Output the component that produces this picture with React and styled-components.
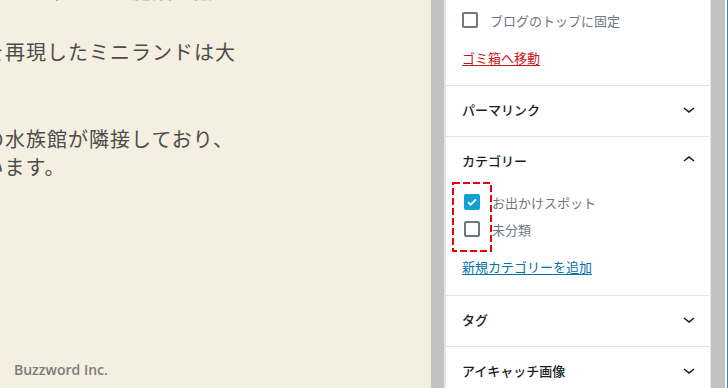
// Import React Libraries
import React from 'react';

// Import Style
import styled, { createGlobalStyle } from 'styled-components';

const jpFont = `"Noto Sans CJK JP", "Noto Sans", sans-serif`;

const GlobalStyle = createGlobalStyle`
  html, body {
    margin: 0;
    padding: 0;
    height: 100%;
    overflow: hidden;
  }
  #root {
    height: 100%;
  }
`;

const Page = styled.div`
  display: flex;
  height: 388px;
  width: 728px;
  overflow: hidden;
`;

// Left side : article preview
const Main = styled.div`
  width: 431px;
  flex: none;
  background: #f4efe0;
  display: flex;
  flex-direction: column;
  overflow: hidden;
`;

const Article = styled.div`
  margin-top: -23px;
  margin-left: -121px;
  font-family: ${jpFont};
  font-size: 20px;
  letter-spacing: 1px;
  line-height: 28px;
  color: #4c4c4c;
`;

const Paragraph = styled.div`
  margin-bottom: ${props => props.gap || 31}px;
`;

const Line = styled.div`
  white-space: nowrap;
`;

const Footer = styled.div`
  margin-top: auto;
  padding: 0 0 9px 14px;
  font-family: "Open Sans", "Noto Sans", sans-serif;
  font-size: 14px;
  font-weight: 600;
  color: #7c7c7c;
`;

// Gutters and scroll track
const Gutter = styled.div`
  flex: none;
  width: ${props => props.width}px;
  background: ${props => props.color};
`;

// Right side : document settings sidebar
const Sidebar = styled.div`
  flex: none;
  width: 264px;
  background: #fff;
  border-left: 2px solid #e4e4e4;
  border-right: 1px solid #e2e4e7;
  font-family: ${jpFont};
  font-size: 13px;
`;

const Section = styled.div`
  border-bottom: 1px solid #e2e4e7;
`;

const TopBody = styled.div`
  padding: 12px 16px 17px 16px;
`;

const CheckRow = styled.label`
  display: flex;
  align-items: center;
  gap: 12px;
  height: ${props => props.height || 16}px;
  margin-bottom: ${props => props.gap || 0}px;
  color: #6c7781;
  line-height: 1;
`;

const Box = styled.span`
  flex: none;
  box-sizing: border-box;
  width: 16px;
  height: 16px;
  border-radius: 2px;
  border: 2px solid ${props => (props.checked ? '#11a0d2' : '#6c7781')};
  background: ${props => (props.checked ? '#11a0d2' : '#fff')};
  display: flex;
  align-items: center;
  justify-content: center;
`;

const TextLink = styled.a`
  display: block;
  line-height: 20px;
  margin-top: ${props => props.top}px;
  margin-left: ${props => props.indent || 0}px;
  color: ${props => props.color};
  text-decoration: underline;
  text-underline-offset: 2px;
  width: max-content;
`;

const Header = styled.div`
  display: flex;
  align-items: center;
  justify-content: space-between;
  box-sizing: border-box;
  height: 50px;
  padding: 0 9px 4px 16px;
  font-weight: 500;
  color: #191e23;
`;

const Body = styled.div`
  position: relative;
  padding: 6px 16px 18px 18px;
`;

const Marker = styled.svg`
  position: absolute;
  left: 6px;
  top: -5px;
`;

function Chevron ({ up }) {
  return (
    <svg width='24' height='24' viewBox='0 0 24 24'>
      <path
        fill='#191e23'
        d={up
          ? 'M6.5 12.4L12 8l5.5 4.4-.9 1.2L12 10l-4.6 3.6-1-1.2z'
          : 'M17.5 11.6L12 16l-5.5-4.4.9-1.2L12 14l4.6-3.6 1 1.2z'}
      />
    </svg>
  );
}

function CheckBox ({ checked }) {
  return (
    <Box checked={checked}>
      {checked && (
        <svg width='12' height='12' viewBox='0 0 12 12'>
          <path d='M2 6.2l2.6 2.5L10 3.4' fill='none' stroke='#fff' strokeWidth='1.8' />
        </svg>
      )}
    </Box>
  );
}

function Panel ({ title }) {
  return (
    <Section>
      <Header>
        {title}
        <Chevron/>
      </Header>
    </Section>
  );
}

function App () {
  return (
    <Page>
      <GlobalStyle/>
      <Main>
        <Article>
          <Paragraph gap={33}>
            <Line>子供から大人まで楽しめる施設が揃っていてとても</Line>
          </Paragraph>
          <Paragraph>
            <Line>有名な建物を再現したミニランドは大</Line>
            <Line>人気。</Line>
          </Paragraph>
          <Paragraph>
            <Line>シーライフの水族館が隣接しており、</Line>
            <Line>親しまれています。</Line>
          </Paragraph>
        </Article>
        <Footer>Buzzword Inc.</Footer>
      </Main>
      <Gutter width={13} color='#c2c2c2'/>
      <Sidebar>
        <Section>
          <TopBody>
            <CheckRow>
              <CheckBox/>
              ブログのトップに固定
            </CheckRow>
            <TextLink top={20} color='#cc1818'>ゴミ箱へ移動</TextLink>
          </TopBody>
        </Section>
        <Panel title='パーマリンク'/>
        <Section>
          <Header>
            カテゴリー
            <Chevron up/>
          </Header>
          <Body>
            <CheckRow height={18} gap={9}>
              <CheckBox checked/>
              お出かけスポット
            </CheckRow>
            <CheckRow height={18}>
              <CheckBox/>
              未分類
            </CheckRow>
            <TextLink top={19} color='#0073aa' indent={-2}>新規カテゴリーを追加</TextLink>
            <Marker width='40' height='70'>
              <rect x='1' y='1' width='38' height='68' fill='none' stroke='#e8000b' strokeWidth='2' strokeDasharray='7 3'/>
            </Marker>
          </Body>
        </Section>
        <Panel title='タグ'/>
        <Panel title='アイキャッチ画像'/>
      </Sidebar>
      <Gutter width={14} color='#c2c2c2'/>
      <Gutter width={2} color='#fff'/>
      <Gutter width={1} color='#1e8cbe'/>
    </Page>
  );
}

export default App;
